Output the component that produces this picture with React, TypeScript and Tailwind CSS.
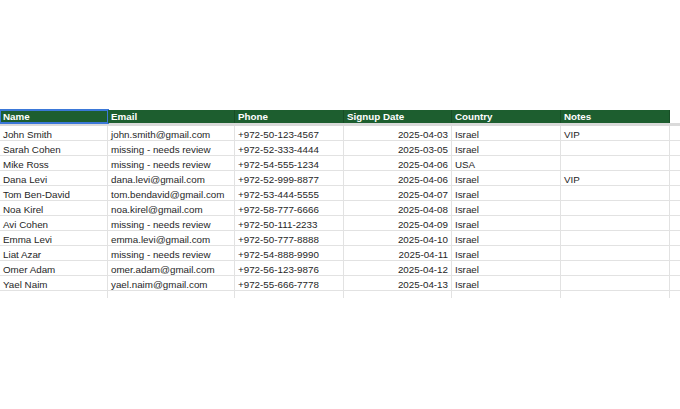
const cols = ["w-[108px]", "w-[127px]", "w-[109px]", "w-[108px]", "w-[109px]", "w-[109px]", "flex-1"];

const rows = [
  ["John Smith", "john.smith@gmail.com", "+972-50-123-4567", "2025-04-03", "Israel", "VIP"],
  ["Sarah Cohen", "missing - needs review", "+972-52-333-4444", "2025-03-05", "Israel", ""],
  ["Mike Ross", "missing - needs review", "+972-54-555-1234", "2025-04-06", "USA", ""],
  ["Dana Levi", "dana.levi@gmail.com", "+972-52-999-8877", "2025-04-06", "Israel", "VIP"],
  ["Tom Ben-David", "tom.bendavid@gmail.com", "+972-53-444-5555", "2025-04-07", "Israel", ""],
  ["Noa Kirel", "noa.kirel@gmail.com", "+972-58-777-6666", "2025-04-08", "Israel", ""],
  ["Avi Cohen", "missing - needs review", "+972-50-111-2233", "2025-04-09", "Israel", ""],
  ["Emma Levi", "emma.levi@gmail.com", "+972-50-777-8888", "2025-04-10", "Israel", ""],
  ["Liat Azar", "missing - needs review", "+972-54-888-9990", "2025-04-11", "Israel", ""],
  ["Omer Adam", "omer.adam@gmail.com", "+972-56-123-9876", "2025-04-12", "Israel", ""],
  ["Yael Naim", "yael.naim@gmail.com", "+972-55-666-7778", "2025-04-13", "Israel", ""],
];

const headers = ["Name", "Email", "Phone", "Signup Date", "Country", "Notes"];

export default function App() {
  return (
    <div className="w-[680px] h-[409px] bg-white font-['Liberation_Sans',Arial,sans-serif] text-[9.8px] text-[#262626]">
      <div className="pt-[110px]">
        {/* header row */}
        <div className="flex h-[13px]">
          {headers.map((h, i) => (
            <div
              key={h}
              className={`${cols[i]} bg-[#1d5e2f] text-white font-bold leading-[14px] px-[3px] border-r border-[#174d26] ${i === 0 ? "outline-2 outline-[#3b78d8] -outline-offset-1" : ""}`}
            >
              {h}
            </div>
          ))}
          <div className="flex-1 bg-white" />
        </div>
        {/* freeze bar */}
        <div className="h-[3px] bg-[#dadada]" />
        {rows.map((r, ri) => (
          <div key={ri} className="flex h-[15px] border-b border-[#e2e2e2]">
            {r.map((c, ci) => (
              <div
                key={ci}
                className={`${cols[ci]} border-r border-[#e2e2e2] leading-[14px] pt-[2px] px-[3px] whitespace-nowrap ${ci === 3 ? "text-right" : ""}`}
              >
                {c}
              </div>
            ))}
            <div className="flex-1" />
          </div>
        ))}
        <div className="flex h-[7px]">
          {cols.slice(0, 6).map((w, i) => (
            <div key={i} className={`${w} border-r border-[#e2e2e2]`} />
          ))}
        </div>
      </div>
    </div>
  );
}
